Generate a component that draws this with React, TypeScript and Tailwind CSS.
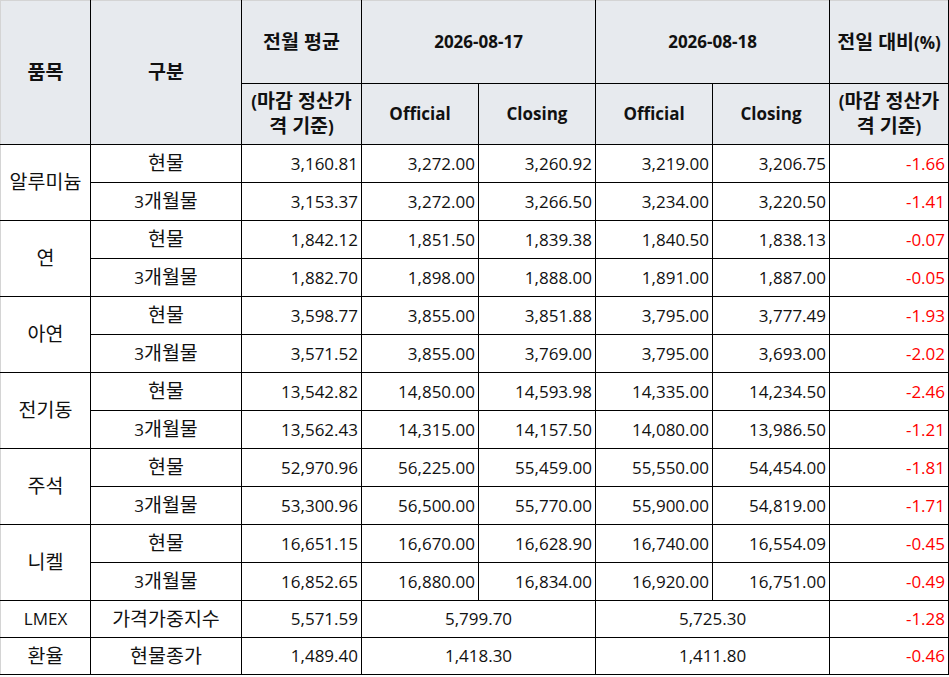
import React from 'react'

type Row = {
  item?: string
  span?: number
  kind: string
  avg: string
  o17: string
  c17?: string
  o18: string
  c18?: string
  diff: string
  h: string
}

const rows: Row[] = [
  { item: '알루미늄', span: 2, kind: '현물', avg: '3,160.81', o17: '3,272.00', c17: '3,260.92', o18: '3,219.00', c18: '3,206.75', diff: '-1.66', h: 'h-[38px]' },
  { kind: '3개월물', avg: '3,153.37', o17: '3,272.00', c17: '3,266.50', o18: '3,234.00', c18: '3,220.50', diff: '-1.41', h: 'h-[38px]' },
  { item: '연', span: 2, kind: '현물', avg: '1,842.12', o17: '1,851.50', c17: '1,839.38', o18: '1,840.50', c18: '1,838.13', diff: '-0.07', h: 'h-[38px]' },
  { kind: '3개월물', avg: '1,882.70', o17: '1,898.00', c17: '1,888.00', o18: '1,891.00', c18: '1,887.00', diff: '-0.05', h: 'h-[38px]' },
  { item: '아연', span: 2, kind: '현물', avg: '3,598.77', o17: '3,855.00', c17: '3,851.88', o18: '3,795.00', c18: '3,777.49', diff: '-1.93', h: 'h-[38px]' },
  { kind: '3개월물', avg: '3,571.52', o17: '3,855.00', c17: '3,769.00', o18: '3,795.00', c18: '3,693.00', diff: '-2.02', h: 'h-[38px]' },
  { item: '전기동', span: 2, kind: '현물', avg: '13,542.82', o17: '14,850.00', c17: '14,593.98', o18: '14,335.00', c18: '14,234.50', diff: '-2.46', h: 'h-[38px]' },
  { kind: '3개월물', avg: '13,562.43', o17: '14,315.00', c17: '14,157.50', o18: '14,080.00', c18: '13,986.50', diff: '-1.21', h: 'h-[38px]' },
  { item: '주석', span: 2, kind: '현물', avg: '52,970.96', o17: '56,225.00', c17: '55,459.00', o18: '55,550.00', c18: '54,454.00', diff: '-1.81', h: 'h-[38px]' },
  { kind: '3개월물', avg: '53,300.96', o17: '56,500.00', c17: '55,770.00', o18: '55,900.00', c18: '54,819.00', diff: '-1.71', h: 'h-[38px]' },
  { item: '니켈', span: 2, kind: '현물', avg: '16,651.15', o17: '16,670.00', c17: '16,628.90', o18: '16,740.00', c18: '16,554.09', diff: '-0.45', h: 'h-[38px]' },
  { kind: '3개월물', avg: '16,852.65', o17: '16,880.00', c17: '16,834.00', o18: '16,920.00', c18: '16,751.00', diff: '-0.49', h: 'h-[38px]' },
  { item: 'LMEX', span: 1, kind: '가격가중지수', avg: '5,571.59', o17: '5,799.70', o18: '5,725.30', diff: '-1.28', h: 'h-[37px]' },
  { item: '환율', span: 1, kind: '현물종가', avg: '1,489.40', o17: '1,418.30', o18: '1,411.80', diff: '-0.46', h: 'h-[37px]' },
]

const cell = 'border border-black p-0'
const num = `${cell} text-right pr-[3px]`
const head = `${cell} bg-[#e7eaee] font-bold text-center`

// Hangul runs render a bit larger than the latin digits, like the source sheet
function Ko({ text }: { text: string }) {
  return (
    <>
      {text.split(/([\uac00-\ud7a3 ]*[\uac00-\ud7a3])/).map((p, i) =>
        /[\uac00-\ud7a3]/.test(p) ? <span key={i} className="text-[19.5px]">{p}</span> : p,
      )}
    </>
  )
}

export default function App() {
  return (
    <div className="bg-white w-[949px] h-[677px] font-['Open_Sans','Noto_Sans_CJK_KR',sans-serif] text-[17px] leading-[24px] text-[#111]">
      <table className="border-collapse table-fixed w-[948px]">
        <colgroup>
          <col className="w-[90px]" />
          <col className="w-[151px]" />
          <col className="w-[120px]" />
          <col className="w-[117px]" />
          <col className="w-[117px]" />
          <col className="w-[117px]" />
          <col className="w-[117px]" />
          <col className="w-[119px]" />
        </colgroup>
        <thead>
          <tr className="h-[83px]">
            <th rowSpan={2} className={`${head} border-l-[#d4d4d4] border-t-[#d4d4d4]`}><Ko text="품목" /></th>
            <th rowSpan={2} className={`${head} border-t-[#d4d4d4]`}><Ko text="구분" /></th>
            <th className={`${head} border-t-[#d4d4d4]`}><Ko text="전월 평균" /></th>
            <th colSpan={2} className={`${head} border-t-[#d4d4d4]`}>2026-08-17</th>
            <th colSpan={2} className={`${head} border-t-[#d4d4d4]`}>2026-08-18</th>
            <th className={`${head} border-t-[#d4d4d4]`}><Ko text="전일 대비" />(%)</th>
          </tr>
          <tr className="h-[61px]">
            <th className={head}>(<Ko text="마감 정산가" /><br /><Ko text="격 기준" />)</th>
            <th className={head}>Official</th>
            <th className={head}>Closing</th>
            <th className={head}>Official</th>
            <th className={head}>Closing</th>
            <th className={head}>(<Ko text="마감 정산가" /><br /><Ko text="격 기준" />)</th>
          </tr>
        </thead>
        <tbody>
          {rows.map((r, i) => (
            <tr key={i} className={r.h}>
              {r.item && (
                <td rowSpan={r.span} className={`${cell} border-l-[#d4d4d4] text-center`}><Ko text={r.item} /></td>
              )}
              <td className={`${cell} text-center`}><Ko text={r.kind} /></td>
              <td className={num}>{r.avg}</td>
              {r.c17 ? (
                <>
                  <td className={num}>{r.o17}</td>
                  <td className={num}>{r.c17}</td>
                  <td className={num}>{r.o18}</td>
                  <td className={num}>{r.c18}</td>
                </>
              ) : (
                <>
                  <td colSpan={2} className={`${cell} text-center`}>{r.o17}</td>
                  <td colSpan={2} className={`${cell} text-center`}>{r.o18}</td>
                </>
              )}
              <td className={`${num} text-[#ff0000]`}>{r.diff}</td>
            </tr>
          ))}
        </tbody>
      </table>
    </div>
  )
}
